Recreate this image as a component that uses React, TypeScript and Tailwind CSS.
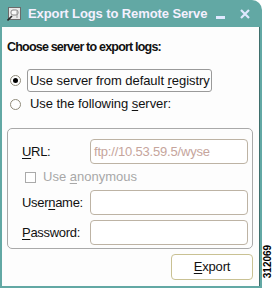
import { useState } from "react";

const font = { fontFamily: '"Liberation Sans", Arial, sans-serif' };

const Mn = ({ children }: { children: string }) => (
  <span className="underline underline-offset-2 decoration-1">{children}</span>
);

const Field = ({ label, value }: { label: React.ReactNode; value?: string }) => (
  <div className="flex items-center h-[25px]">
    <div className="w-[68px] text-[13px] tracking-[-0.3px] text-[#111]">{label}</div>
    <div className="w-[158px] h-[25px] rounded-[4px] border border-[#bdb3a4] bg-white flex items-center px-[3px] text-[13px] tracking-[-0.2px] text-[#c6a59c]">
      {value}
    </div>
  </div>
);

export default function App() {
  const [choice, setChoice] = useState(0);

  return (
    <div className="w-[274px] h-[289px] bg-white flex" style={font}>
      <div className="w-[262px] h-[288px] bg-[#62a8a4] rounded-tr-[10px] flex flex-col px-[2px] pb-[2px]">
        {/* title bar */}
        <div className="h-[27px] flex items-center pl-[5px] pr-[10px] shrink-0">
          <svg width="14" height="14" viewBox="0 0 14 14" className="mr-[7px]">
            <rect x="1.5" y="0.5" width="12" height="12" fill="#e8e8e8" stroke="#6b6b6b" />
            <rect x="4" y="3" width="7" height="5" rx="2" fill="#f8f8f8" stroke="#7a7a7a" strokeWidth="0.9" />
            <path d="M0.5 13.5 L5 9" stroke="#2a2a2a" strokeWidth="1.6" />
            <path d="M10 4 v7" stroke="#9a9a9a" strokeWidth="1" />
          </svg>
          <div className="text-[13px] font-bold text-[#f4f0ff] whitespace-nowrap tracking-[-0.1px]">
            Export Logs to Remote Serve
          </div>
          <div className="ml-auto flex items-end gap-[15px]">
            <div className="w-[9px] h-[3px] bg-[#dfe8ff] mt-[8px]" />
            <svg width="10" height="10" viewBox="0 0 10 10">
              <path d="M1 1 L9 9 M9 1 L1 9" stroke="#dfe8ff" strokeWidth="2.2" />
            </svg>
          </div>
        </div>

        {/* body */}
        <div className="flex-1 bg-[#fdfdfd] border-r border-[#3f6f6c] px-[5px] pt-[11px]">
          <div className="text-[12.5px] font-bold text-[#111] leading-[18px] tracking-[-0.8px]">
            Choose server to export logs:
          </div>

          <div className="mt-[12px] flex items-center h-[24px]">
            <button
              onClick={() => setChoice(0)}
              className="w-[11px] h-[11px] rounded-full border border-[#8f8a7a] bg-white flex items-center justify-center ml-[3px] mr-[6px]"
            >
              {choice === 0 && <span className="w-[5px] h-[5px] rounded-full bg-black" />}
            </button>
            <div className="h-[23px] border border-[#9a9a9a] rounded-[3px] pl-[2px] pr-[1px] leading-[21px] text-[13px] text-[#111] tracking-[-0.05px]">
              Use server from default <Mn>r</Mn>egistry
            </div>
          </div>

          <div className="flex items-center h-[24px]">
            <button
              onClick={() => setChoice(1)}
              className="w-[11px] h-[11px] rounded-full border border-[#8f8a7a] bg-white flex items-center justify-center ml-[3px] mr-[9px]"
            >
              {choice === 1 && <span className="w-[5px] h-[5px] rounded-full bg-black" />}
            </button>
            <div className="text-[13px] text-[#111] tracking-[-0.05px]">
              Use the following <Mn>s</Mn>erver:
            </div>
          </div>

          {/* group */}
          <div className="mt-[12px] w-[246px] h-[121px] border border-[#a9a9a9] rounded-[5px] pl-[14px] pt-[10px]">
            <Field label={<><Mn>U</Mn>RL:</>} value="ftp://10.53.59.5/wyse" />
            <div className="flex items-center h-[26px] pl-[3px]">
              <span className="w-[11px] h-[11px] border border-[#aaa] bg-white mr-[7px]" />
              <span className="text-[13px] text-[#a8a8a8] tracking-[0px]">
                Use <Mn>a</Mn>nonymous
              </span>
            </div>
            <Field label={<>User<Mn>n</Mn>ame:</>} />
            <div className="mt-[5px]">
              <Field label={<><Mn>P</Mn>assword:</>} />
            </div>
          </div>

          <div className="w-[246px] flex justify-end mt-[5px]">
            <div className="w-[82px] h-[26px] border border-[#c9c193] rounded-[4px] bg-white flex items-center justify-center text-[13px] tracking-[-0.2px] text-[#111]">
              <span>
                <Mn>E</Mn>xport
              </span>
            </div>
          </div>
        </div>
      </div>

      <div className="flex-1 relative">
        <div className="absolute left-[1px] bottom-[4px] w-[10px] h-[42px] flex items-end justify-center">
          <span className="block -rotate-90 origin-center text-[10px] font-bold text-black whitespace-nowrap translate-y-[-16px]">
            312069
          </span>
        </div>
      </div>
    </div>
  );
}
